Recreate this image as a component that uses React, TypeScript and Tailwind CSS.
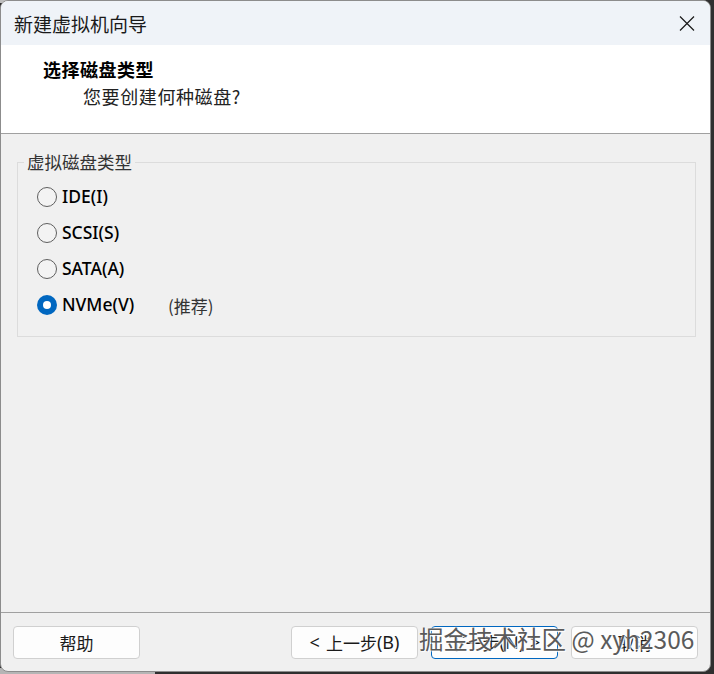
import React from "react";

const cjk = "font-['Noto_Sans_CJK_SC','Noto_Sans',sans-serif]";
const latin = "font-['Noto_Sans','Noto_Sans_CJK_SC',sans-serif]";

function Radio({ label, checked, extra }: { label: string; checked?: boolean; extra?: string }) {
  return (
    <div className="flex h-[36px] items-center">
      {checked ? (
        <span className="flex h-[20px] w-[20px] items-center justify-center rounded-full bg-[#0067c0]">
          <span className="h-[8px] w-[8px] rounded-full bg-white" />
        </span>
      ) : (
        <span className="h-[20px] w-[20px] rounded-full border border-[#5f5f5f] bg-[#f3f3f3]" />
      )}
      <span className={`ml-[5px] w-[106px] text-[17.5px] font-medium leading-none text-black ${latin}`}>{label}</span>
      {extra && <span className={`text-[17px] leading-none text-[#333] ${cjk}`}>{extra}</span>}
    </div>
  );
}

function Button({ children, primary }: { children: React.ReactNode; primary?: boolean }) {
  return (
    <button
      className={`flex h-[33px] w-[127px] items-center justify-center rounded-[4px] border bg-[#fdfdfd] text-[17px] text-[#1a1a1a] ${cjk} ${
        primary ? "border-[#0067c0]" : "border-[#d0d0d0]"
      }`}
    >
      {children}
    </button>
  );
}

export default function App() {
  return (
    <div className="relative h-[674px] w-[714px] overflow-hidden bg-[#2f2f2f]">
      <div className="absolute left-0 top-0 h-[3px] w-[114px] bg-[#bdbdbd]" />
      <div className="absolute bottom-0 left-0 h-[6px] w-[155px] bg-[#b5b5b5]" />

      <div className="relative flex h-[672px] w-[711px] flex-col overflow-hidden rounded-[8px] border border-[#8c8c8c] bg-[#f0f0f0]">
        {/* Title bar */}
        <div className="flex h-[44px] shrink-0 items-center justify-between bg-[#eff3f8] pl-[13px] pr-[15px]">
          <span className={`text-[19px] leading-none text-[#1a1a1a] ${cjk}`}>新建虚拟机向导</span>
          <svg width="16" height="15" viewBox="0 0 16 15" className="mt-[1px]">
            <path d="M1 0.5 L15 14.5 M15 0.5 L1 14.5" stroke="#1a1a1a" strokeWidth="1.2" fill="none" />
          </svg>
        </div>

        {/* Header */}
        <div className="h-[89px] shrink-0 border-b border-[#a0a0a0] bg-white pl-[42px] pt-[13px]">
          <div className={`text-[18px] font-bold leading-[22px] tracking-[0.5px] text-black ${cjk}`}>选择磁盘类型</div>
          <div className={`ml-[40px] mt-[5px] text-[18px] leading-[22px] tracking-[0.6px] text-[#222] ${cjk}`}>
            您要创建何种磁盘?
          </div>
        </div>

        {/* Body */}
        <div className="flex-1 pl-[16px] pr-[14px] pt-[28px]">
          <div className="relative border border-[#dcdcdc] pb-[13px] pl-[19px] pt-[16px]">
            <span
              className={`absolute left-[6px] top-[-12px] bg-[#f0f0f0] px-[3px] text-[17.5px] leading-[22px] text-[#333] ${cjk}`}
            >
              虚拟磁盘类型
            </span>
            <Radio label="IDE(I)" />
            <Radio label="SCSI(S)" />
            <Radio label="SATA(A)" />
            <Radio label="NVMe(V)" checked extra="(推荐)" />
          </div>
        </div>

        {/* Footer */}
        <div className="flex h-[59px] shrink-0 items-start border-t border-[#a0a0a0] px-[12px] pt-[13px]">
          <Button>帮助</Button>
          <div className="ml-auto flex gap-[13px]">
            <Button>
              <span className={`text-[18px] ${latin}`}>&lt;</span>
              <span className="ml-[6px]">上一步</span>
              <span className={`text-[18px] ${latin}`}>(B)</span>
            </Button>
            <Button primary>
              <span>下一步</span>
              <span className={`text-[18px] ${latin}`}>(N)</span>
              <span className={`ml-[6px] text-[18px] ${latin}`}>&gt;</span>
            </Button>
            <Button>取消</Button>
          </div>
        </div>

        {/* Watermark */}
        <div
          className={`absolute left-[418px] top-[622px] whitespace-nowrap text-[24.5px] leading-[32px] text-[#5a5a5a] [text-shadow:0_0_2px_#ffffff,1px_1px_1px_#ffffff] ${cjk}`}
        >
          掘金技术社区 @ xyh2306
        </div>
      </div>
    </div>
  );
}
